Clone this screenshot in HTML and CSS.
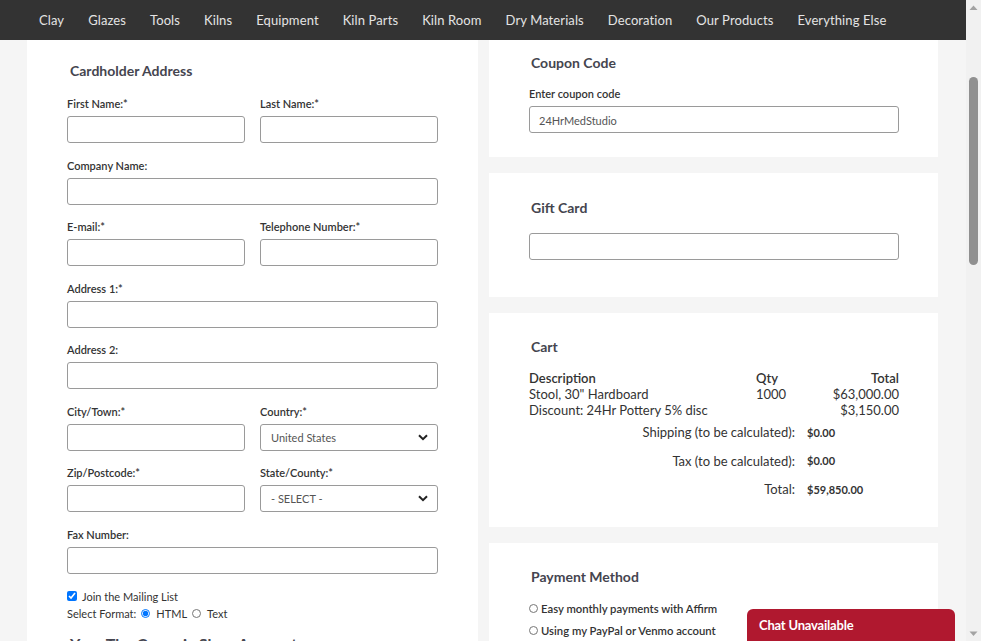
FILE: index.html
```html
<!DOCTYPE html>
<html lang="en">
<head>
<meta charset="utf-8">
<title>Checkout</title>
<link rel="stylesheet" href="styles.css">
</head>
<body>
<div class="window">
  <div class="main">
    <nav class="topnav">
      <a>Clay</a><a>Glazes</a><a>Tools</a><a>Kilns</a><a>Equipment</a><a>Kiln Parts</a><a>Kiln Room</a><a>Dry Materials</a><a>Decoration</a><a>Our Products</a><a>Everything Else</a>
    </nav>
    <div class="content">
      <section class="panel left">
        <h2 class="heading">Cardholder Address</h2>
        <div class="fields">
          <div class="field"><label>First Name:*</label><div class="input"></div></div>
          <div class="field"><label>Last Name:*</label><div class="input"></div></div>
          <div class="field full"><label>Company Name:</label><div class="input"></div></div>
          <div class="field"><label>E-mail:*</label><div class="input"></div></div>
          <div class="field"><label>Telephone Number:*</label><div class="input"></div></div>
          <div class="field full"><label>Address 1:*</label><div class="input"></div></div>
          <div class="field full"><label>Address 2:</label><div class="input"></div></div>
          <div class="field"><label>City/Town:*</label><div class="input"></div></div>
          <div class="field"><label>Country:*</label>
            <div class="input select"><span>United States</span>
              <svg width="10" height="7" viewBox="0 0 10 7"><path d="M1 1.2 L5 5.2 L9 1.2" fill="none" stroke="#222" stroke-width="2"/></svg>
            </div>
          </div>
          <div class="field"><label>Zip/Postcode:*</label><div class="input"></div></div>
          <div class="field"><label>State/County:*</label>
            <div class="input select"><span>- SELECT -</span>
              <svg width="10" height="7" viewBox="0 0 10 7"><path d="M1 1.2 L5 5.2 L9 1.2" fill="none" stroke="#222" stroke-width="2"/></svg>
            </div>
          </div>
          <div class="field full"><label>Fax Number:</label><div class="input"></div></div>
        </div>
        <div class="mailing">
          <div class="line"><input type="checkbox" checked class="chk"><span>Join the Mailing List</span></div>
          <div class="line"><span>Select Format:</span><input type="radio" name="fmt" checked class="rad"><span>HTML</span><input type="radio" name="fmt" class="rad"><span>Text</span></div>
        </div>
        <h2 class="heading second">Your The Ceramic Shop Account</h2>
      </section>
      <div class="right">
        <section class="panel p1">
          <h2 class="heading">Coupon Code</h2>
          <label>Enter coupon code</label>
          <div class="input wide"><span>24HrMedStudio</span></div>
        </section>
        <section class="panel p2">
          <h2 class="heading">Gift Card</h2>
          <div class="input wide gift"></div>
        </section>
        <section class="panel p3">
          <h2 class="heading">Cart</h2>
          <div class="cart">
            <div class="th">Description</div><div class="th">Qty</div><div class="th r">Total</div>
            <div>Stool, 30" Hardboard</div><div>1000</div><div class="r">$63,000.00</div>
            <div>Discount: 24Hr Pottery 5% disc</div><div></div><div class="r">$3,150.00</div>
          </div>
          <div class="summary">
            <div class="sl">Shipping (to be calculated):</div><div class="sv">$0.00</div>
            <div class="sl">Tax (to be calculated):</div><div class="sv">$0.00</div>
            <div class="sl">Total:</div><div class="sv">$59,850.00</div>
          </div>
        </section>
        <section class="panel p4">
          <h2 class="heading">Payment Method</h2>
          <div class="pay"><input type="radio" name="pm" class="rad2">Easy monthly payments with Affirm</div>
          <div class="pay"><input type="radio" name="pm" class="rad2">Using my PayPal or Venmo account</div>
        </section>
      </div>
    </div>
  </div>
  <div class="scrollbar">
    <svg class="arrow" width="15" height="15" viewBox="0 0 15 15"><path d="M3.5 10 L7.5 5.5 L11.5 10 Z" fill="#a3a3a3"/></svg>
    <div class="track"><div class="thumb"></div></div>
    <svg class="arrow" width="15" height="15" viewBox="0 0 15 15"><path d="M3.5 5.5 L7.5 10 L11.5 5.5 Z" fill="#a3a3a3"/></svg>
  </div>
  <div class="chat">Chat Unavailable</div>
</div>
</body>
</html>
```
FILE: styles.css
```css
* { box-sizing: border-box; }
html, body { margin: 0; padding: 0; height: 100%; overflow: hidden; }
body { font-family: Lato, "Liberation Sans", sans-serif; color: #333; background: #f5f5f5; }
.window { display: flex; width: 981px; height: 641px; position: relative; }
.main { width: 966px; display: flex; flex-direction: column; overflow: hidden; }
.topnav { height: 40px; background: #333333; display: flex; align-items: center; gap: 24px; padding-left: 39px; flex-shrink: 0; }
.topnav a { color: #e4e4e4; font-size: 13px; letter-spacing: 0.1px; }
.content { flex: 1; display: flex; gap: 11px; padding-left: 27px; align-items: flex-start; background: #f5f5f5; }
.panel { background: #fff; }
.heading { margin: 0; font-size: 14px; line-height: 18px; font-weight: 700; color: #45454f; padding-left: 2px; }
.left { width: 451px; padding: 22px 40px 0 40px; height: 620px; }
.left > .heading { padding-left: 3px; margin-bottom: 16px; }
.fields { display: grid; grid-template-columns: 1fr 1fr; column-gap: 15px; row-gap: 14.5px; width: 371px; }
.field.full { grid-column: 1 / 3; }
label { display: block; font-size: 11px; line-height: 14px; font-weight: 600; color: #333; margin-bottom: 6px; }
.field label { padding-top: 1px; line-height: 13px; }
.input { height: 27px; border: 1px solid #9a9a9a; border-radius: 3px; background: #fff; }
.select { display: flex; align-items: center; justify-content: space-between; padding: 0 9px 0 10px; font-size: 11px; color: #555; }
.mailing { margin-top: 14px; font-size: 11px; color: #333; }
.line { display: flex; align-items: center; height: 17px; }
.chk { width: 10px; height: 10px; margin: 0 5px 0 0; }
.rad { width: 9px; height: 9px; margin: 0 6px 0 5px; }
.heading.second { margin-top: 13px; font-size: 16px; padding-left: 3px; }
.right { width: 449px; display: flex; flex-direction: column; gap: 16px; }
.right .panel { padding-left: 40px; padding-right: 39px; }
.p1 { padding-top: 14px; padding-bottom: 24px; }
.p1 .heading { margin-bottom: 15px; }
.p1 label { margin-bottom: 5px; }
.wide { width: 370px; display: flex; align-items: center; padding-left: 9px; padding-top: 1px; font-size: 11px; color: #555; }
.p2 { padding-top: 26px; padding-bottom: 37px; }
.p2 .heading { margin-bottom: 16px; }
.p3 { padding-top: 25px; padding-bottom: 23px; }
.p3 .heading { margin-bottom: 14px; }
.cart { display: grid; grid-template-columns: 227px 1fr auto; width: 370px; font-size: 13px; line-height: 16px; color: #333; }
.cart .th { font-weight: 600; }
.cart .r { text-align: right; }
.summary { display: grid; grid-template-columns: 266px auto; column-gap: 12px; grid-auto-rows: 28.5px; align-items: center; }
.sl { text-align: right; font-size: 13px; color: #333; }
.sv { font-size: 11px; font-weight: 700; color: #333; }
.p4 { padding-top: 25px; height: 120px; }
.p4 .heading { margin-bottom: 12px; }
.pay { display: flex; align-items: center; height: 22px; font-size: 11.3px; font-weight: 600; color: #333; }
.rad2 { width: 9px; height: 9px; margin: 0 3px 0 0; }
.scrollbar { width: 15px; background: #f1f1f1; display: flex; flex-direction: column; align-items: center; }
.arrow { display: block; flex-shrink: 0; }
.track { flex: 1; width: 15px; position: relative; }
.thumb { position: absolute; left: 3px; width: 9px; top: 62px; height: 188px; background: #909090; border-radius: 5px; }
.chat { position: absolute; left: 747px; top: 609px; width: 208px; height: 40px; background: #b0182f; border-radius: 6px 6px 0 0; color: #fff; font-size: 13px; font-weight: 700; padding: 8px 0 0 12px; letter-spacing: -0.2px; }
```
